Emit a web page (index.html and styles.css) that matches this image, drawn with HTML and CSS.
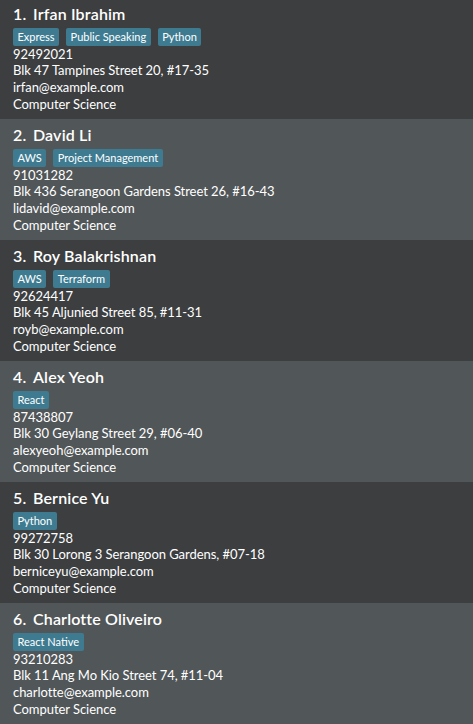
FILE: index.html
```html
<!DOCTYPE html>
<html lang="en">
<head>
<meta charset="utf-8">
<title>Person List</title>
<link rel="stylesheet" href="styles.css">
</head>
<body>
<ul class="person-list">
  <li class="card">
    <div class="name-line"><span class="id">1.</span><span class="name">Irfan Ibrahim</span></div>
    <div class="tags"><span class="tag">Express</span><span class="tag">Public Speaking</span><span class="tag">Python</span></div>
    <div class="detail">92492021</div>
    <div class="detail">Blk 47 Tampines Street 20, #17-35</div>
    <div class="detail">irfan@example.com</div>
    <div class="detail">Computer Science</div>
  </li>
  <li class="card">
    <div class="name-line"><span class="id">2.</span><span class="name">David Li</span></div>
    <div class="tags"><span class="tag">AWS</span><span class="tag">Project Management</span></div>
    <div class="detail">91031282</div>
    <div class="detail">Blk 436 Serangoon Gardens Street 26, #16-43</div>
    <div class="detail">lidavid@example.com</div>
    <div class="detail">Computer Science</div>
  </li>
  <li class="card">
    <div class="name-line"><span class="id">3.</span><span class="name">Roy Balakrishnan</span></div>
    <div class="tags"><span class="tag">AWS</span><span class="tag">Terraform</span></div>
    <div class="detail">92624417</div>
    <div class="detail">Blk 45 Aljunied Street 85, #11-31</div>
    <div class="detail">royb@example.com</div>
    <div class="detail">Computer Science</div>
  </li>
  <li class="card">
    <div class="name-line"><span class="id">4.</span><span class="name">Alex Yeoh</span></div>
    <div class="tags"><span class="tag">React</span></div>
    <div class="detail">87438807</div>
    <div class="detail">Blk 30 Geylang Street 29, #06-40</div>
    <div class="detail">alexyeoh@example.com</div>
    <div class="detail">Computer Science</div>
  </li>
  <li class="card">
    <div class="name-line"><span class="id">5.</span><span class="name">Bernice Yu</span></div>
    <div class="tags"><span class="tag">Python</span></div>
    <div class="detail">99272758</div>
    <div class="detail">Blk 30 Lorong 3 Serangoon Gardens, #07-18</div>
    <div class="detail">berniceyu@example.com</div>
    <div class="detail">Computer Science</div>
  </li>
  <li class="card">
    <div class="name-line"><span class="id">6.</span><span class="name">Charlotte Oliveiro</span></div>
    <div class="tags"><span class="tag">React Native</span></div>
    <div class="detail">93210283</div>
    <div class="detail">Blk 11 Ang Mo Kio Street 74, #11-04</div>
    <div class="detail">charlotte@example.com</div>
    <div class="detail">Computer Science</div>
  </li>
</ul>
</body>
</html>
```
FILE: styles.css
```css
html, body {
  margin: 0;
  padding: 0;
  background: #515658;
  overflow: hidden;
}

body {
  font-family: "Lato", "Liberation Sans", sans-serif;
  color: #ffffff;
}

.person-list {
  list-style: none;
  margin: -2px 0 0 0;
  padding: 0;
}

.card {
  box-sizing: border-box;
  height: 121px;
  padding: 5px 13px 0 13px;
  background: #515658;
}

.card:nth-child(odd) {
  background: #3c3e3f;
}

.name-line {
  display: flex;
  font-size: 16px;
  font-weight: 600;
  line-height: 22px;
  letter-spacing: 0.15px;
}

.id {
  width: 20px;
  flex: none;
}

.tags {
  display: flex;
  flex-wrap: wrap;
  gap: 7px;
  margin-top: 3px;
}

.tag {
  background: #3e7b91;
  color: #ffffff;
  font-size: 11px;
  line-height: 15.5px;
  padding: 1px 4.5px;
  border-radius: 2px;
}

.detail {
  font-size: 13px;
  line-height: 16.8px;
  letter-spacing: -0.05px;
}
```
